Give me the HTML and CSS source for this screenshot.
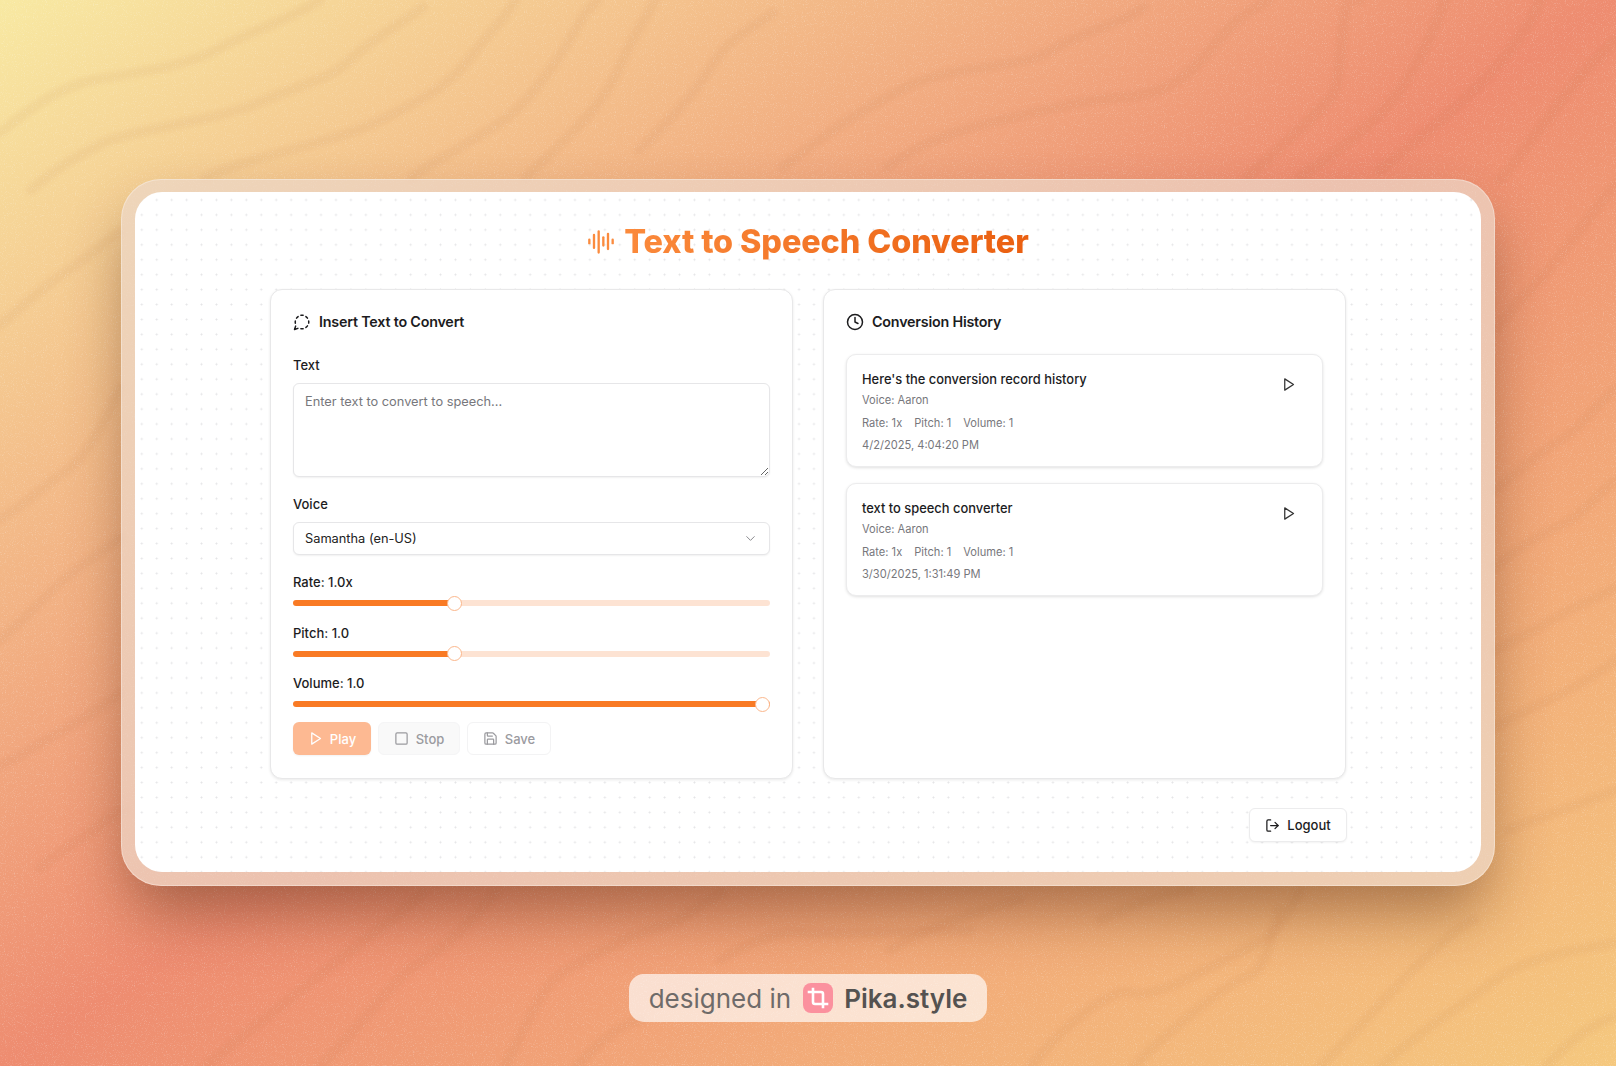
FILE: index.html
```html
<!DOCTYPE html>
<html lang="en">
<head>
<meta charset="utf-8">
<title>Text to Speech Converter</title>
<link rel="stylesheet" href="styles.css">
</head>
<body>
<div class="stage">
  <svg class="backdrop" viewBox="0 0 1616 1066" preserveAspectRatio="none" aria-hidden="true">
    <defs>
      <filter id="grain" x="0" y="0" width="100%" height="100%">
        <feTurbulence type="fractalNoise" baseFrequency="0.9" numOctaves="2" seed="4"/>
        <feColorMatrix values="0 0 0 0 1  0 0 0 0 1  0 0 0 0 1  0 0 0 3.2 -1.75"/>
      </filter>
    </defs>
    <g class="waves">
      <path d="M0 133C40 100 60 90 82 83S180 70 216 50 290 20 320 0"/>
      <path d="M31 190C60 165 80 155 103 143S220 120 258 103 330 80 350 60 400 25 423 7"/>
      <path d="M206 177C270 150 330 145 381 120S450 85 474 53 505 20 515 0"/>
      <path d="M412 177C450 150 500 130 526 100S565 50 577 27 592 8 598 0"/>
      <path d="M526 177C565 140 600 110 618 70S640 30 655 0"/>
      <path d="M639 150C665 125 690 100 711 67S750 30 773 13"/>
      <path d="M783 167C825 135 860 110 907 87S1020 70 1052 50 1120 25 1144 7"/>
      <path d="M887 167C925 140 960 130 990 123S1080 100 1125 97 1190 75 1216 43 1255 10 1268 0"/>
      <path d="M1247 177C1290 140 1320 110 1330 100S1340 40 1345 13 1352 5 1360 0"/>
      <path d="M1300 177C1340 150 1380 120 1400 90S1430 40 1445 0"/>
      <path d="M1380 170C1430 130 1480 90 1510 50S1530 20 1540 0"/>
      <path d="M1500 180C1535 140 1570 80 1616 40"/>
      <path d="M0 325C25 305 45 285 67 271S100 245 120 232"/>
      <path d="M0 519C25 505 45 485 67 470S105 420 120 388"/>
      <path d="M0 640C25 620 45 595 67 577S105 550 120 538"/>
      <path d="M0 766C25 755 45 740 67 728S105 705 120 693"/>
      <path d="M40 868C60 850 80 840 100 825S115 815 125 810"/>
      <path d="M1496 330C1510 310 1525 295 1543 276S1590 215 1616 184"/>
      <path d="M1496 490C1515 475 1535 455 1559 441S1595 405 1616 388"/>
      <path d="M1496 567C1515 550 1540 535 1563 524S1595 495 1616 480"/>
      <path d="M1496 650C1515 640 1535 630 1559 616S1595 600 1616 587"/>
      <path d="M1496 727C1515 715 1540 705 1563 693S1595 675 1616 660"/>
      <path d="M1509 830C1545 815 1580 805 1616 790"/>
      <path d="M206 1066C250 1030 320 975 361 943S405 910 423 893"/>
      <path d="M320 1066C360 1030 390 980 423 960S470 920 495 893"/>
      <path d="M505 1066C525 1030 540 990 557 977S640 930 660 927 705 900 722 893"/>
      <path d="M577 1066C600 1040 620 1025 640 1020"/>
      <path d="M720 960C760 935 790 930 804 933S950 930 970 930"/>
      <path d="M1031 1066C1060 1030 1110 985 1134 993S1240 950 1258 943 1290 910 1299 893"/>
      <path d="M1134 1066C1170 1030 1230 980 1247 977S1275 930 1278 910"/>
      <path d="M1320 1066C1350 1040 1400 980 1423 960S1460 925 1474 920"/>
      <path d="M1382 1066C1420 1030 1470 1000 1495 980S1570 950 1616 943"/>
      <path d="M1546 1066C1570 1040 1590 1025 1616 1016"/>
      <path d="M890 950C930 925 980 910 1020 900"/>
      <path d="M1100 920C1130 905 1160 895 1190 890"/>
    </g>
    <rect class="grain" width="1616" height="1066" filter="url(#grain)"/>
  </svg>

  <div class="frame">
    <main class="card">
      <h1 class="title">
        <svg class="title-icon" viewBox="0 0 24 24" aria-hidden="true">
          <path d="M2 10v3"/><path d="M6 6v11"/><path d="M10 3v18"/><path d="M14 8v7"/><path d="M18 5v13"/><path d="M22 10v3"/>
        </svg>
        <span class="title-text">Text to Speech Converter</span>
      </h1>

      <div class="panels">
        <section class="panel">
          <h2 class="panel-head">
            <svg class="icon" viewBox="0 0 24 24" aria-hidden="true">
              <path d="M13.5 3.1c-.5 0-1-.1-1.5-.1s-1 .1-1.5.1"/><path d="M19.3 6.8a10.45 10.45 0 0 0-2.1-2.1"/><path d="M20.9 13.5c.1-.5.1-1 .1-1.5s-.1-1-.1-1.5"/><path d="M17.2 19.3a10.45 10.45 0 0 0 2.1-2.1"/><path d="M10.5 20.9c.5.1 1 .1 1.5.1s1-.1 1.5-.1"/><path d="M3.5 17.5 2 22l4.5-1.5"/><path d="M3.1 10.5c0 .5-.1 1-.1 1.5s.1 1 .1 1.5"/><path d="M6.8 4.7a10.45 10.45 0 0 0-2.1 2.1"/>
            </svg>
            Insert Text to Convert
          </h2>

          <label class="label" for="text">Text</label>
          <textarea class="textarea" id="text" placeholder="Enter text to convert to speech..."></textarea>

          <label class="label" for="voice">Voice</label>
          <div class="select-wrap">
            <select class="select" id="voice"><option>Samantha (en-US)</option></select>
            <svg class="chevron" viewBox="0 0 24 24" aria-hidden="true"><path d="m6 9 6 6 6-6"/></svg>
          </div>

          <div class="sliders">
            <div class="slider">
              <label class="label-tight" for="rate">Rate: 1.0x</label>
              <input class="range" id="rate" type="range" min="0.5" max="2" step="0.1" value="1" style="--fill:33.8%">
            </div>
            <div class="slider">
              <label class="label-tight" for="pitch">Pitch: 1.0</label>
              <input class="range" id="pitch" type="range" min="0.5" max="2" step="0.1" value="1" style="--fill:33.8%">
            </div>
            <div class="slider">
              <label class="label-tight" for="volume">Volume: 1.0</label>
              <input class="range" id="volume" type="range" min="0" max="1" step="0.1" value="1" style="--fill:100%">
            </div>
          </div>

          <div class="actions">
            <button class="btn btn-play" type="button">
              <svg class="icon-sm" viewBox="0 0 24 24" aria-hidden="true"><polygon points="6 3 20 12 6 21 6 3"/></svg>Play
            </button>
            <button class="btn btn-stop" type="button">
              <svg class="icon-sm" viewBox="0 0 24 24" aria-hidden="true"><rect x="3" y="3" width="18" height="18" rx="2"/></svg>Stop
            </button>
            <button class="btn btn-save" type="button">
              <svg class="icon-sm" viewBox="0 0 24 24" aria-hidden="true"><path d="M15.2 3a2 2 0 0 1 1.4.6l3.8 3.8a2 2 0 0 1 .6 1.4V19a2 2 0 0 1-2 2H5a2 2 0 0 1-2-2V5a2 2 0 0 1 2-2z"/><path d="M17 21v-7a1 1 0 0 0-1-1H8a1 1 0 0 0-1 1v7"/><path d="M7 3v4a1 1 0 0 0 1 1h7"/></svg>Save
            </button>
          </div>
        </section>

        <section class="panel">
          <h2 class="panel-head">
            <svg class="icon" viewBox="0 0 24 24" aria-hidden="true"><circle cx="12" cy="12" r="10"/><polyline points="12 6 12 12 16 14"/></svg>
            Conversion History
          </h2>
          <ul class="history">
            <li class="item">
              <div class="item-body">
                <p class="item-title">Here's the conversion record history</p>
                <p class="meta">Voice: Aaron</p>
                <p class="meta meta-row"><span>Rate: 1x</span><span>Pitch: 1</span><span>Volume: 1</span></p>
                <p class="meta">4/2/2025, 4:04:20 PM</p>
              </div>
              <button class="item-play" type="button" aria-label="Play">
                <svg class="icon-play" viewBox="0 0 24 24" aria-hidden="true"><polygon points="6 3 20 12 6 21 6 3"/></svg>
              </button>
            </li>
            <li class="item">
              <div class="item-body">
                <p class="item-title">text to speech converter</p>
                <p class="meta">Voice: Aaron</p>
                <p class="meta meta-row"><span>Rate: 1x</span><span>Pitch: 1</span><span>Volume: 1</span></p>
                <p class="meta">3/30/2025, 1:31:49 PM</p>
              </div>
              <button class="item-play" type="button" aria-label="Play">
                <svg class="icon-play" viewBox="0 0 24 24" aria-hidden="true"><polygon points="6 3 20 12 6 21 6 3"/></svg>
              </button>
            </li>
          </ul>
        </section>
      </div>

      <div class="footer">
        <button class="btn btn-logout" type="button">
          <svg class="icon-sm" viewBox="0 0 24 24" aria-hidden="true"><path d="M9 21H5a2 2 0 0 1-2-2V5a2 2 0 0 1 2-2h4"/><polyline points="16 17 21 12 16 7"/><line x1="21" y1="12" x2="9" y2="12"/></svg>Logout
        </button>
      </div>
    </main>
  </div>

  <div class="pill">
    <span class="pill-text">designed in</span>
    <svg class="pika" viewBox="0 0 30 30" aria-hidden="true">
      <rect class="pika-bg" width="30" height="30" rx="8"/>
      <path class="pika-crop" d="M10 6v13a2 2 0 0 0 2 2h12M20 24V11a2 2 0 0 0-2-2H6"/>
    </svg>
    <span class="pill-brand">Pika.style</span>
  </div>
</div>
</body>
</html>
```
FILE: styles.css
```css
* { box-sizing: border-box; }
html, body { margin: 0; padding: 0; }
body { font-family: Inter, "Liberation Sans", sans-serif; color: #1c1c1e; }

.stage {
  position: relative;
  width: 1616px;
  height: 1066px;
  overflow: hidden;
  display: flex;
  flex-direction: column;
  align-items: center;
  background: linear-gradient(to bottom right, #f8e9a2 0%, #f3ba88 25%, #ee8c70 50%, #f2a878 72%, #f5c87e 100%);
}
.backdrop { position: absolute; inset: 0; width: 100%; height: 100%; }
.waves { filter: blur(2px); }
.waves path {
  fill: none;
  stroke: #b8683c;
  stroke-opacity: .065;
  stroke-width: 10;
  stroke-linecap: round;
}
.grain { opacity: .22; }

.frame {
  position: relative;
  width: 1374px;
  height: 707px;
  margin-top: 179px;
  padding: 12px 13px;
  border-radius: 40px;
  border: 1px solid rgba(255, 255, 255, .32);
  background: rgba(235, 215, 200, .72);
  box-shadow: 0 32px 60px -8px rgba(70, 30, 10, .45);
}
.card {
  height: 680px;
  margin: 0;
  padding: 30px 135px 0;
  background-color: #fff;
  background-image: radial-gradient(circle, #e4e4e6 .9px, transparent 1.1px);
  background-size: 14.94px 14.94px;
  background-position: -.7px .5px;
  border-radius: 27px;
}

.title {
  display: flex;
  align-items: center;
  justify-content: center;
  gap: 9px;
  height: 40px;
  margin: 0 0 27px;
  font-size: 32.4px;
  font-weight: 800;
  letter-spacing: -.1px;
  line-height: 40px;
}
.title-icon {
  width: 28px;
  height: 28px;
  fill: none;
  stroke: #fb8b3e;
  stroke-width: 2;
  stroke-linecap: round;
}
.title-text {
  background: linear-gradient(90deg, #fb8a3c, #ea5f10);
  -webkit-background-clip: text;
  background-clip: text;
  color: transparent;
}

.panels { display: grid; grid-template-columns: 523px 523px; gap: 30px; }
.panel {
  height: 490px;
  padding: 21px 22px 22px;
  background: #fff;
  border: 1px solid #e8e8e9;
  border-radius: 12px;
  box-shadow: 0 1px 3px rgba(0, 0, 0, .09);
}
.panel-head {
  display: flex;
  align-items: center;
  gap: 8px;
  height: 21px;
  margin: 0 0 24px;
  font-size: 14.3px;
  font-weight: 600;
  letter-spacing: -.2px;
}
.icon, .icon-sm, .icon-play, .chevron {
  flex: none;
  fill: none;
  stroke: currentColor;
  stroke-width: 2;
  stroke-linecap: round;
  stroke-linejoin: round;
}
.icon { width: 18px; height: 18px; }
.icon-sm { width: 15px; height: 15px; }
.icon-play { width: 15px; height: 15px; color: #333; }

.label, .label-tight {
  display: block;
  height: 18px;
  font-size: 13px;
  font-weight: 500;
  line-height: 18px;
}
.label { margin-bottom: 9px; }
.textarea {
  display: block;
  width: 100%;
  height: 94px;
  margin-bottom: 18px;
  padding: 9px 11px;
  border: 1px solid #e6e6e8;
  border-radius: 6px;
  box-shadow: 0 1px 2px rgba(0, 0, 0, .06);
  font: 400 12.8px/18px Inter, "Liberation Sans", sans-serif;
  resize: vertical;
  outline: none;
}
.textarea::placeholder { color: #77777c; }

.select-wrap { position: relative; margin: 0 0 18px; }
.select {
  display: block;
  width: 100%;
  height: 33px;
  padding: 0 11px;
  appearance: none;
  background: #fff;
  border: 1px solid #e6e6e8;
  border-radius: 6px;
  box-shadow: 0 1px 2px rgba(0, 0, 0, .06);
  color: #222;
  font: 400 12.8px Inter, "Liberation Sans", sans-serif;
}
.chevron {
  position: absolute;
  right: 12px;
  top: 9px;
  width: 15px;
  height: 15px;
  color: #8a8a8e;
  stroke-width: 1.6;
}

.sliders { display: flex; flex-direction: column; gap: 8.5px; }
.range {
  display: block;
  width: 100%;
  height: 24px;
  margin: 0;
  appearance: none;
  background: transparent;
}
.range::-webkit-slider-runnable-track {
  height: 6px;
  border-radius: 3px;
  background: linear-gradient(90deg, #f97a24 var(--fill), #fde3d3 var(--fill));
}
.range::-webkit-slider-thumb {
  appearance: none;
  width: 15px;
  height: 15px;
  margin-top: -4.5px;
  background: #fff;
  border: 1.5px solid #fbb78c;
  border-radius: 50%;
}

.actions { display: flex; gap: 7px; margin-top: 6px; }
.btn {
  display: inline-flex;
  align-items: center;
  justify-content: center;
  gap: 7px;
  height: 33px;
  padding: 0;
  border: 1px solid transparent;
  border-radius: 6px;
  background: #fff;
  font: 500 13px Inter, "Liberation Sans", sans-serif;
}
.btn-play { width: 78px; background: #fdb992; color: #fff; box-shadow: 0 1px 2px rgba(0, 0, 0, .05); }
.btn-stop { width: 82px; background: #f9f9f9; border-color: #f5f5f6; color: #9b9b9f; }
.btn-save { width: 84px; border-color: #f3f3f4; color: #9b9b9f; }

.history { display: flex; flex-direction: column; gap: 16px; margin: -2px 0 0; padding: 0; list-style: none; }
.item {
  display: flex;
  justify-content: space-between;
  align-items: flex-start;
  height: 113px;
  padding: 15px 15px 0;
  border: 1px solid #ececed;
  border-radius: 10px;
  background: #fff;
  box-shadow: 0 1px 3px rgba(0, 0, 0, .12);
}
.item-title { margin: 0 0 2px; font-size: 12.9px; font-weight: 500; line-height: 20px; }
.meta { margin: 0 0 5.7px; font-size: 11.1px; line-height: 17px; color: #77777c; }
.meta-row { display: flex; gap: 12px; }
.item-play {
  display: flex;
  align-items: center;
  justify-content: center;
  width: 38px;
  height: 28px;
  padding: 0;
  border: 0;
  background: none;
}

.footer { display: flex; justify-content: flex-end; margin-top: 29px; margin-right: -1px; }
.btn-logout {
  width: 98px;
  height: 34px;
  border-color: #ececed;
  color: #1c1c1e;
  box-shadow: 0 1px 2px rgba(0, 0, 0, .05);
}

.pill {
  position: relative;
  display: flex;
  align-items: center;
  gap: 11.5px;
  height: 48px;
  margin-top: 88px;
  padding: 0 20px;
  border-radius: 15px;
  background: rgba(255, 255, 255, .66);
  font-size: 26px;
}
.pill-text { color: #6f6b69; }
.pill-brand { color: #555250; font-weight: 600; }
.pika { width: 30px; height: 30px; }
.pika-bg { fill: #fb919e; }
.pika-crop { fill: none; stroke: #fff; stroke-width: 2.6; stroke-linecap: square; }
```
